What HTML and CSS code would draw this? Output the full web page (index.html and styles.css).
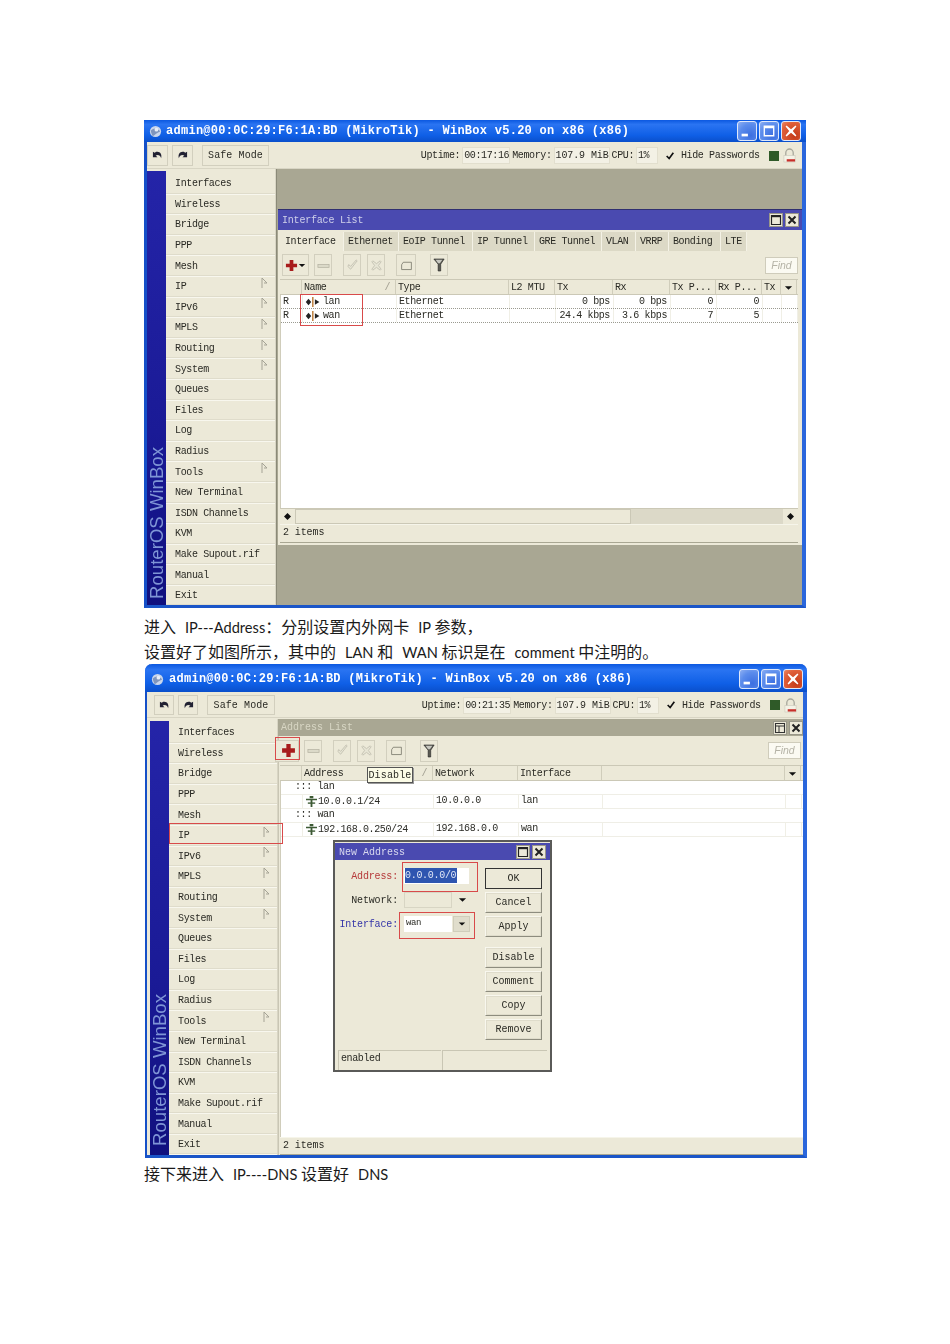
FILE: index.html
```html
<!DOCTYPE html>
<html lang="zh">
<head>
<meta charset="utf-8">
<title>WinBox</title>
<link rel="stylesheet" href="styles.css">
</head>
<body>
<svg class="defs" width="0" height="0" aria-hidden="true">
  <symbol id="i-logo" viewBox="0 0 14 14"><circle cx="7" cy="7" r="6" fill="#c9d6ec"/><path d="M2 6c3-3 7-3 10 1-3 1-6 4-8 5C3 10 2 8 2 6z" fill="#7f95bd"/><circle cx="8" cy="5" r="2" fill="#e8eef8"/></symbol>
  <symbol id="i-undo" viewBox="0 0 16 12"><path d="M3 2v6h5L6 6c2-1 5-1 6 3 1-4-1-7-4-7-1 0-2 0-3 1z" fill="#223"/></symbol>
  <symbol id="i-redo" viewBox="0 0 16 12"><path d="M13 2v6H8l2-2C8 5 5 5 4 9 3 5 5 2 8 2c1 0 2 0 3 1z" fill="#223"/></symbol>
  <symbol id="i-min" viewBox="0 0 20 20"><rect x="4" y="13" width="7" height="3" fill="#fff"/></symbol>
  <symbol id="i-max" viewBox="0 0 20 20"><path d="M4 4h12v12H4zM5.500 7v7.500h9V7z" fill="#fff" fill-rule="evenodd"/></symbol>
  <symbol id="i-close" viewBox="0 0 20 20"><path d="M5 4l5 4 5-4 1 1-4 5 4 5-1 1-5-4-5 4-1-1 4-5-4-5z" fill="#fff"/></symbol>
  <symbol id="i-lock" viewBox="0 0 14 16"><path d="M3 9V5a4 4 0 018 0v4" fill="none" stroke="#a8a89c" stroke-width="1.400"/><rect x="1" y="8" width="12" height="7" fill="#f4f2e6" stroke="#c8c6b8" stroke-width=".6"/><rect x="4" y="12" width="9" height="2.500" fill="#c8302a"/></symbol>
  <symbol id="i-check" viewBox="0 0 12 12"><path d="M2 6l3 3 5-7" fill="none" stroke="#111" stroke-width="2"/></symbol>
  <symbol id="i-plus" viewBox="0 0 14 14"><path d="M5 1h4v4h4v4H9v4H5V9H1V5h4z" fill="#a81c1c"/></symbol>
  <symbol id="i-minus" viewBox="0 0 14 14"><rect x="1" y="6" width="12" height="3" fill="#dcdac9" stroke="#b4b2a2" stroke-width=".8"/></symbol>
  <symbol id="i-tick" viewBox="0 0 14 14"><path d="M2 8l3 3 7-9-1-1-6 7-2-2z" fill="#e8e6d6" stroke="#bab8a8" stroke-width=".8"/></symbol>
  <symbol id="i-cross" viewBox="0 0 14 14"><path d="M2 3l1-1 4 3 4-3 1 1-3 4 3 4-1 1-4-3-4 3-1-1 3-4z" fill="#e8e6d6" stroke="#bab8a8" stroke-width=".8"/></symbol>
  <symbol id="i-note" viewBox="0 0 16 14"><path d="M4 3h10v9H2V6z" fill="#ece9d8" stroke="#77766a"/></symbol>
  <symbol id="i-filter" viewBox="0 0 14 16"><path d="M1 1h12L9 7v8H6V7z" fill="#5a5a52" stroke="#222" stroke-width=".7"/><path d="M3 2h8L8 6H6z" fill="#c8c8c0"/></symbol>
  <symbol id="i-mark" viewBox="0 0 7 12"><path d="M1 1v10M1 1l5 5-3 0" fill="none" stroke="#a5a395"/></symbol>
  <symbol id="i-iface" viewBox="0 0 18 11"><path d="M3.500 2l3 3.500-3 3.500-3-3.500z" fill="#222"/><rect x="7.500" y="0" width="1.500" height="11" fill="#b8742c"/><path d="M10.500 2.500l5 3-5 3z" fill="#222"/></symbol>
  <symbol id="i-addr" viewBox="0 0 14 12"><path d="M1 3h12v1.500H8V12H6V4.500H1z" fill="#3d5a34"/><rect x="5" y="0" width="4" height="2.500" fill="#3d5a34"/><rect x="3" y="7" width="8" height="1.500" fill="#3d5a34"/></symbol>
  <symbol id="i-down" viewBox="0 0 10 6"><path d="M1 1h8L5 5z" fill="#111"/></symbol>
  <symbol id="i-dia" viewBox="0 0 8 8"><path d="M4 0l4 4-4 4-4-4z" fill="#111"/></symbol>
  <symbol id="i-sq" viewBox="0 0 12 12"><path d="M1.500 1.500h9v9h-9z" fill="#ece9d8" stroke="#222" stroke-width="1.200"/><rect x="1" y="1" width="10" height="2.200" fill="#222"/></symbol>
  <symbol id="i-sq2" viewBox="0 0 12 12"><path d="M1.500 1.500h9v9h-9z" fill="none" stroke="#333" stroke-width="1.100"/><path d="M1.500 4h9M5 4v6.500" stroke="#333" stroke-width="1"/></symbol>
  <symbol id="i-x" viewBox="0 0 12 12"><path d="M2.500 2.500l7 7M9.500 2.500l-7 7" stroke="#222" stroke-width="2"/></symbol>
</svg>

<main class="page">
  <!-- first window -->
  <section class="win win-a ui">
    <header class="titlebar">
      <svg class="logo"><use href="#i-logo"/></svg>
      <span class="title-text">admin@00:0C:29:F6:1A:BD (MikroTik) - WinBox v5.20 on x86 (x86)</span>
      <span class="xp-btns">
        <span class="xp xp-blue"><svg><use href="#i-min"/></svg></span>
        <span class="xp xp-blue"><svg><use href="#i-max"/></svg></span>
        <span class="xp xp-red"><svg><use href="#i-close"/></svg></span>
      </span>
    </header>
    <div class="toolbar">
      <button class="tb-btn"><svg><use href="#i-undo"/></svg></button>
      <button class="tb-btn"><svg><use href="#i-redo"/></svg></button>
      <button class="tb-btn safe">Safe Mode</button>
      <span class="status-group">
        <span>Uptime:</span><span class="stat s-up">00:17:16</span>
        <span>Memory:</span><span class="stat s-mem">107.9 MiB</span>
        <span>CPU:</span><span class="stat s-cpu">1%</span>
        <span class="chk"><svg><use href="#i-check"/></svg></span>
        <span class="hide">Hide Passwords</span>
        <span class="led"></span>
        <svg class="lock"><use href="#i-lock"/></svg>
      </span>
    </div>
    <div class="main">
      <div class="strip"><span class="brand">RouterOS WinBox</span></div>
      <nav class="menu">
        <div class="mi">Interfaces</div><div class="mi">Wireless</div><div class="mi">Bridge</div><div class="mi">PPP</div><div class="mi">Mesh</div>
        <div class="mi">IP<svg class="mark"><use href="#i-mark"/></svg></div>
        <div class="mi">IPv6<svg class="mark"><use href="#i-mark"/></svg></div>
        <div class="mi">MPLS<svg class="mark"><use href="#i-mark"/></svg></div>
        <div class="mi">Routing<svg class="mark"><use href="#i-mark"/></svg></div>
        <div class="mi">System<svg class="mark"><use href="#i-mark"/></svg></div>
        <div class="mi">Queues</div><div class="mi">Files</div><div class="mi">Log</div><div class="mi">Radius</div>
        <div class="mi">Tools<svg class="mark"><use href="#i-mark"/></svg></div>
        <div class="mi">New Terminal</div><div class="mi">ISDN Channels</div><div class="mi">KVM</div><div class="mi">Make Supout.rif</div><div class="mi">Manual</div><div class="mi">Exit</div>
      </nav>
      <div class="desktop">
        <div class="subwin">
          <div class="subtitle">
            <span>Interface List</span>
            <span class="sub-btns"><span class="sq"><svg><use href="#i-sq"/></svg></span><span class="sq"><svg><use href="#i-x"/></svg></span></span>
          </div>
          <div class="tabs">
            <span class="tab active">Interface</span><span class="tab t-eth">Ethernet</span><span class="tab t-eoip">EoIP Tunnel</span><span class="tab t-ip">IP Tunnel</span><span class="tab t-gre">GRE Tunnel</span><span class="tab t-vlan">VLAN</span><span class="tab t-vrrp">VRRP</span><span class="tab t-bond">Bonding</span><span class="tab t-lte">LTE</span>
          </div>
          <div class="tabpanel">
            <div class="list-tools">
              <button class="lt lt-add"><svg class="ic14"><use href="#i-plus"/></svg><svg class="ic-dn"><use href="#i-down"/></svg></button>
              <button class="lt lt-m"><svg class="ic14"><use href="#i-minus"/></svg></button>
              <button class="lt lt-c"><svg class="ic14"><use href="#i-tick"/></svg></button>
              <button class="lt lt-x"><svg class="ic14"><use href="#i-cross"/></svg></button>
              <button class="lt lt-n"><svg class="ic14"><use href="#i-note"/></svg></button>
              <button class="lt lt-f"><svg class="ic14"><use href="#i-filter"/></svg></button>
              <span class="find">Find</span>
            </div>
            <div class="grid-if g-head">
              <span></span><span class="sorted">Name<i>/</i></span><span>Type</span><span>L2 MTU</span><span>Tx</span><span>Rx</span><span>Tx P...</span><span>Rx P...</span><span>Tx</span><span class="h-arrow"><svg><use href="#i-down"/></svg></span>
            </div>
            <div class="list-body">
              <div class="grid-if g-row">
                <span>R</span><span class="nm"><svg class="if-ic"><use href="#i-iface"/></svg>lan</span><span>Ethernet</span><span></span><span class="r">0 bps</span><span class="r">0 bps</span><span class="r">0</span><span class="r">0</span><span></span><span></span>
              </div>
              <div class="grid-if g-row">
                <span>R</span><span class="nm"><svg class="if-ic"><use href="#i-iface"/></svg>wan</span><span>Ethernet</span><span></span><span class="r">24.4 kbps</span><span class="r">3.6 kbps</span><span class="r">7</span><span class="r">5</span><span></span><span></span>
              </div>
            </div>
            <div class="hscroll">
              <span class="sb-btn"><svg><use href="#i-dia"/></svg></span><span class="sb-thumb"></span><span class="sb-track"></span><span class="sb-btn"><svg><use href="#i-dia"/></svg></span>
            </div>
            <div class="status-line">2 items</div>
          </div>
        </div>
      </div>
    </div>
    <div class="redbox rb-a1"></div>
  </section>

  <p class="doc doc-first">进入 <span class="lat">IP---Address</span>：分别设置内外网卡 <span class="lat">IP </span>参数，</p>
  <p class="doc">设置好了如图所示，其中的 <span class="lat">LAN </span>和 <span class="lat">WAN </span>标识是在 <span class="lat">comment </span>中注明的。</p>

  <!-- second window -->
  <section class="win win-b ui">
    <header class="titlebar">
      <svg class="logo"><use href="#i-logo"/></svg>
      <span class="title-text">admin@00:0C:29:F6:1A:BD (MikroTik) - WinBox v5.20 on x86 (x86)</span>
      <span class="xp-btns">
        <span class="xp xp-blue"><svg><use href="#i-min"/></svg></span>
        <span class="xp xp-blue"><svg><use href="#i-max"/></svg></span>
        <span class="xp xp-red"><svg><use href="#i-close"/></svg></span>
      </span>
    </header>
    <div class="toolbar">
      <button class="tb-btn"><svg><use href="#i-undo"/></svg></button>
      <button class="tb-btn"><svg><use href="#i-redo"/></svg></button>
      <button class="tb-btn safe">Safe Mode</button>
      <span class="status-group">
        <span>Uptime:</span><span class="stat s-up">00:21:35</span>
        <span>Memory:</span><span class="stat s-mem">107.9 MiB</span>
        <span>CPU:</span><span class="stat s-cpu">1%</span>
        <span class="chk"><svg><use href="#i-check"/></svg></span>
        <span class="hide">Hide Passwords</span>
        <span class="led"></span>
        <svg class="lock"><use href="#i-lock"/></svg>
      </span>
    </div>
    <div class="main">
      <div class="strip"><span class="brand">RouterOS WinBox</span></div>
      <nav class="menu">
        <div class="mi">Interfaces</div><div class="mi">Wireless</div><div class="mi">Bridge</div><div class="mi">PPP</div><div class="mi">Mesh</div>
        <div class="mi">IP<svg class="mark"><use href="#i-mark"/></svg></div>
        <div class="mi">IPv6<svg class="mark"><use href="#i-mark"/></svg></div>
        <div class="mi">MPLS<svg class="mark"><use href="#i-mark"/></svg></div>
        <div class="mi">Routing<svg class="mark"><use href="#i-mark"/></svg></div>
        <div class="mi">System<svg class="mark"><use href="#i-mark"/></svg></div>
        <div class="mi">Queues</div><div class="mi">Files</div><div class="mi">Log</div><div class="mi">Radius</div>
        <div class="mi">Tools<svg class="mark"><use href="#i-mark"/></svg></div>
        <div class="mi">New Terminal</div><div class="mi">ISDN Channels</div><div class="mi">KVM</div><div class="mi">Make Supout.rif</div><div class="mi">Manual</div><div class="mi">Exit</div>
      </nav>
      <div class="addr">
        <div class="addr-title">
          <span>Address List</span>
          <span class="sub-btns"><span class="sq"><svg><use href="#i-sq2"/></svg></span><span class="sq"><svg><use href="#i-x"/></svg></span></span>
        </div>
        <div class="list-tools tools-b">
          <button class="lt lt-add2"><svg class="ic14"><use href="#i-plus"/></svg></button>
          <button class="lt lt-m"><svg class="ic14"><use href="#i-minus"/></svg></button>
          <button class="lt lt-c"><svg class="ic14"><use href="#i-tick"/></svg></button>
          <button class="lt lt-x"><svg class="ic14"><use href="#i-cross"/></svg></button>
          <button class="lt lt-n"><svg class="ic14"><use href="#i-note"/></svg></button>
          <button class="lt lt-f"><svg class="ic14"><use href="#i-filter"/></svg></button>
          <span class="find find-b">Find</span>
        </div>
        <div class="grid-ad g-head">
          <span></span><span class="sorted">Address<i>/</i></span><span>Network</span><span>Interface</span><span></span><span class="h-arrow"><svg><use href="#i-down"/></svg></span>
        </div>
        <div class="list-body">
          <div class="ad-comment">::: lan</div>
          <div class="grid-ad ad-row"><span></span><span class="nm"><svg class="ad-ic"><use href="#i-addr"/></svg>10.0.0.1/24</span><span>10.0.0.0</span><span>lan</span><span></span><span></span></div>
          <div class="ad-comment">::: wan</div>
          <div class="grid-ad ad-row"><span></span><span class="nm"><svg class="ad-ic"><use href="#i-addr"/></svg>192.168.0.250/24</span><span>192.168.0.0</span><span>wan</span><span></span><span></span></div>
        </div>
        <div class="status-line st-b">2 items</div>
      </div>
    </div>

    <div class="tooltip">Disable</div>
    <div class="redbox rb-b1"></div>
    <div class="redbox rb-b2"></div>

    <div class="dialog">
      <div class="dlg-title"><span>New Address</span><span class="sub-btns"><span class="sq"><svg><use href="#i-sq"/></svg></span><span class="sq"><svg><use href="#i-x"/></svg></span></span></div>
      <div class="dlg-body">
        <div class="dlg-form">
          <div class="frow"><label class="lb-red">Address:</label><span class="inp inp-addr"><b>0.0.0.0/0</b></span></div>
          <div class="frow"><label>Network:</label><span class="inp inp-off"></span><svg class="dd"><use href="#i-down"/></svg></div>
          <div class="frow"><label class="lb-blue">Interface:</label><span class="inp inp-w">wan</span><span class="ddbtn"><svg><use href="#i-down"/></svg></span></div>
        </div>
        <div class="dlg-btns">
          <button class="dbtn def">OK</button><button class="dbtn">Cancel</button><button class="dbtn gap">Apply</button>
          <button class="dbtn">Disable</button><button class="dbtn">Comment</button><button class="dbtn">Copy</button><button class="dbtn">Remove</button>
        </div>
      </div>
      <div class="dlg-status"><span>enabled</span><span></span></div>
      <div class="redbox rb-d1"></div>
      <div class="redbox rb-d2"></div>
    </div>
  </section>

  <p class="doc doc-last">接下来进入 <span class="lat">IP----DNS </span>设置好 <span class="lat">DNS</span></p>
</main>
</body>
</html>
```
FILE: styles.css
```css
* { box-sizing: border-box; }
html, body { margin: 0; padding: 0; background: #fff; }
.defs { position: absolute; }
.page { width: 950px; height: 1344px; padding: 120px 0 0 144px; overflow: hidden; }

.doc {
  margin: 0; height: 25px; line-height: 25px; font-size: 16px; color: #1a1a1a;
  font-family: Lato, "Noto Sans CJK SC", sans-serif;
  white-space: nowrap; word-spacing: 4.900px;
}
.doc-first { margin-top: 6px; }
.doc-last { margin-top: 3px; }
.lat { font-size: 14.600px; word-spacing: 0; }

.ui {
  font-family: "Liberation Mono", "DejaVu Sans Mono", monospace;
  font-size: 10px; letter-spacing: -.38px; color: #2a2a24;
}
.win {
  position: relative; width: 662px; display: flex; flex-direction: column;
  background: #ece9d8; filter: blur(.4px);
  border-left: 3px solid #1550c8; border-right: 4px solid #2a66dc; border-bottom: 3px solid #1a55c8;
}
.win-a { height: 488px; }
.win-b { height: 494px; margin-left: 1px; border-left-width: 2px; border-top-left-radius: 7px; border-top-right-radius: 7px; }

.titlebar {
  display: flex; align-items: center; margin: 0 -4px 0 -3px; padding: 0 5px 0 5px;
  background: linear-gradient(#0b58e0, #2a74f2 20%, #0f5fe6 70%, #0a4fcb);
  color: #fff; height: 22px;
}
.win-b .titlebar { height: 28px; border-radius: 7px 7px 0 0; padding: 2px 4px 0 6px; margin-left: -2px; }
.logo { width: 13px; height: 13px; flex: none; }
.title-text { margin-left: 4px; font-size: 12px; font-weight: 700; letter-spacing: .27px; white-space: nowrap; }
.win-b .title-text { margin-left: 5px; }
.xp-btns { margin-left: auto; display: flex; gap: 2px; }
.xp { width: 20px; height: 20px; border: 1px solid #dfe8fa; border-radius: 3px; display: block; }
.xp svg { width: 18px; height: 18px; display: block; }
.xp-blue { background: radial-gradient(circle at 70% 75%, #3c6fe0, #5b8cec 60%, #8fb0f2); }
.xp-red { background: radial-gradient(circle at 70% 75%, #c43a18, #e0603a 70%, #ec8a66); }

.toolbar { display: flex; align-items: center; height: 27px; background: #ece9d8; padding-left: 0; padding-top: 1px; border-bottom: 1px solid #d8d5c4; }
.win-b .toolbar { height: 26px; padding-left: 7px; }
.tb-btn {
  font: inherit; letter-spacing: inherit; color: inherit; width: 21px; height: 21px; padding: 0; margin-right: 4px;
  background: #ece9d8; border: 1px solid #d2cfbe; display: flex; align-items: center; justify-content: center;
}
.win-b .tb-btn { width: 20px; height: 20px; }
.tb-btn svg { width: 15px; height: 11px; }
.tb-btn.safe { width: 67px; margin-left: 5px; margin-right: 0; font-size: 10px; letter-spacing: .1px; }
.win-b .tb-btn.safe { width: 68px; margin-left: 5px; }
.status-group { margin-left: auto; display: flex; align-items: center; padding-right: 6px; white-space: nowrap; }
.stat { background: #f3f1e5; border: 1px solid #e2dfce; height: 17px; line-height: 15px; padding-left: 1px; margin: 0 2px; }
.s-up { width: 48px; }
.s-mem { width: 56px; letter-spacing: -.1px; }
.s-cpu { width: 22px; }
.chk { width: 10px; height: 10px; margin: 0 6px 0 5px; display: block; }
.chk svg { width: 10px; height: 10px; display: block; }
.hide { width: 79px; }
.led { width: 10px; height: 10px; background: #2f5a28; margin-left: 9px; }
.lock { width: 13px; height: 15px; margin-left: 4px; }

.main { flex: 1; display: flex; min-height: 0; overflow: hidden; background: #ece9d8; }
.win-b .main { padding-left: 3px; padding-top: 1px; }
.strip {
  width: 19px; flex: none; background: linear-gradient(#2424a8, #1a1a96 60%, #10107e);
  display: flex; align-items: flex-end; justify-content: center; padding-bottom: 6px; margin-top: 2px; overflow: hidden;
}
.win-b .strip { padding-bottom: 9px; }
.brand {
  writing-mode: vertical-rl; transform: rotate(180deg); font-family: "Liberation Sans", Arial, sans-serif;
  font-size: 18.600px; letter-spacing: 0; color: #7f95d6; white-space: nowrap;
}
.menu { width: 110px; flex: none; padding-top: 5px; border-right: 1px solid #d8d5c4; }
.win-b .menu { width: 109px; padding-top: 4px; }
.mi {
  height: 20.600px; display: flex; align-items: center; justify-content: space-between;
  padding: 0 7px 0 9px; border-bottom: 1px solid #f8f7ee; box-shadow: inset 0 -1px 0 #dfdccb;
  letter-spacing: -.36px;
}
.mark { width: 7px; height: 12px; margin-top: -8px; }

.desktop { flex: 1; background: #a9a793; padding: 40px 0 60px 1px; border-left: 1px solid #8b8a78; }
.subwin { height: 100%; display: flex; flex-direction: column; background: #ece9d8; border-right: 1px solid #8b8a78; }
.subtitle {
  height: 21px; flex: none; background: #4a4ab0; color: #cfd0ea; display: flex; align-items: center; justify-content: space-between;
  padding: 0 4px; border-top: 1px solid #2f2f70; letter-spacing: -.2px;
}
.sub-btns { display: flex; gap: 2px; }
.sq { width: 14px; height: 14px; background: #ece9d8; border: 1px solid #999789; display: block; }
.sq svg { width: 12px; height: 12px; display: block; }
.tabs { display: flex; height: 21px; flex: none; padding: 2px 0 0 2px; }
.tab { height: 19px; line-height: 19px; padding-left: 4px; background: #dcd9c6; border-right: 1px solid #f4f2e6; white-space: nowrap; }
.tab.active { background: #ece9d8; width: 64px; padding-left: 5px; }
.t-eth { width: 55px; } .t-eoip { width: 74px; } .t-ip { width: 62px; } .t-gre { width: 67px; }
.t-vlan { width: 34px; } .t-vrrp { width: 33px; } .t-bond { width: 52px; } .t-lte { width: 26px; }
.tabpanel { flex: 1; display: flex; flex-direction: column; margin: 0 5px 2px 2px; min-height: 0; }

.list-tools { height: 28px; flex: none; display: flex; align-items: center; padding-left: 2px; }
.lt { padding: 0; background: #ece9d8; border: 1px solid #d2cfbe; height: 22px; width: 18px; display: flex; align-items: center; justify-content: center; margin-right: 6px; }
.ic14 { width: 13px; height: 13px; flex: none; }
.ic-dn { width: 8px; height: 5px; }
.lt-add { width: 27px; margin-right: 5px; }
.lt-m { width: 18px; margin-right: 11px; }
.lt-c { margin-right: 6px; }
.lt-x { margin-right: 11px; }
.lt-n { width: 20px; margin-right: 14px; }
.lt-f { width: 18px; }
.lt-f .ic14 { width: 12px; height: 14px; }
.find {
  margin-left: auto; width: 33px; height: 17px; background: #fbfaf2; border: 1px solid #cfccbb; color: #b5b3a6;
  font: italic 10.500px "Liberation Sans", sans-serif; letter-spacing: 0; text-align: center; line-height: 15px;
}

.grid-if { display: grid; grid-template-columns: 22px 94px 113px 46px 58px 57px 46px 46px 19px 16px; }
.g-head { height: 16px; flex: none; background: #ece9d8; border-top: 1px solid #cbc8b6; border-bottom: 1px solid #cbc8b6; }
.g-head > span { padding: 1px 2px 0; line-height: 14px; border-right: 1px solid #d0cdbb; white-space: nowrap; overflow: hidden; }
.sorted { display: flex; justify-content: space-between; }
.sorted i { color: #a09e90; font-style: normal; padding-right: 3px; }
.h-arrow { display: flex; align-items: center; justify-content: center; }
.h-arrow svg { width: 9px; height: 6px; }

.list-body { flex: 1; background: #fff; min-height: 0; border-left: 1px solid #d0cdbb; }
.g-row { height: 14px; border-bottom: 1px dotted #9a9a90; }
.g-row > span { padding: 0 2px; line-height: 13px; border-right: 1px solid #f0efe6; white-space: nowrap; }
.g-row .r { text-align: right; padding-right: 3px; }
.nm { display: flex; align-items: center; }
.if-ic { width: 17px; height: 10px; flex: none; margin-right: 1px; }

.hscroll { height: 16px; flex: none; display: flex; background: #ece9d8; border-top: 1px solid #cbc8b6; }
.sb-btn { width: 15px; display: flex; align-items: center; justify-content: center; }
.sb-btn svg { width: 7px; height: 7px; }
.sb-thumb { width: 336px; background: #ece9d8; border: 1px solid #cbc8b6; }
.sb-track { flex: 1; background: #dcd9c8; }
.status-line { height: 19px; flex: none; padding-left: 3px; line-height: 16px; border-top: 1px solid #f6f5ea; letter-spacing: -.1px; border-bottom: 1px solid #a9a793; }

.addr { flex: 1; display: flex; flex-direction: column; min-width: 0; border-left: 1px solid #c9c6b4; padding-left: 1px; }
.addr-title {
  height: 17px; margin-left: -2px; flex: none; background: #a9a793; color: #d8d6c4; display: flex; align-items: center; justify-content: space-between;
  padding: 0 0 0 3px; letter-spacing: 0;
}
.tools-b { height: 29px; margin-left: -5px; padding-left: 0; }
.lt-add2 { width: 24px; margin-right: 5px; padding-left: 3px; }
.lt-add2 .ic14 { width: 15px; height: 15px; }
.find-b { margin-right: 2px; }
.grid-ad { display: grid; grid-template-columns: 22px 131px 85px 84px 183px 16px; }
.ad-comment { height: 13px; padding-left: 14px; line-height: 12px; white-space: nowrap; }
.ad-row { height: 15px; background: #fff; border-top: 1px solid #efeee6; border-bottom: 1px solid #efeee6; }
.ad-row > span { line-height: 12px; padding: 0 2px; border-right: 1px solid #f0efe6; white-space: nowrap; }
.ad-ic { width: 13px; height: 11px; flex: none; }
.st-b { height: 18px; }

.redbox { position: absolute; border: 1px solid #d84a4a; pointer-events: none; }
.rb-a1 { left: 153px; top: 174px; width: 63px; height: 32px; }
.rb-b1 { left: 128px; top: 73px; width: 25px; height: 23px; }
.rb-b2 { left: 22px; top: 159px; width: 114px; height: 21px; }

.tooltip {
  position: absolute; left: 220px; top: 103px; width: 46px; height: 16px; background: #fbfbe6; border: 1px solid #555;
  line-height: 15px; text-align: center; letter-spacing: .15px; z-index: 2; box-shadow: 1px 1px 0 #999;
}

.dialog {
  position: absolute; left: 186px; top: 176px; width: 219px; height: 232px; background: #ece9d8; border: 2px solid #5a5a58;
  display: flex; flex-direction: column; z-index: 3;
}
.dlg-title {
  height: 17px; flex: none; margin-top: 1px; background: #4a4ab0; color: #d8d8ee; display: flex; align-items: center; justify-content: space-between;
  padding: 0 4px; letter-spacing: 0;
}
.dlg-title > span:first-child { padding-top: 2px; }
.dlg-body { flex: 1; display: flex; justify-content: space-between; min-height: 0; padding: 8px 8px 0 0; }
.dlg-form { width: 136px; display: flex; flex-direction: column; gap: 8px; }
.frow { display: flex; align-items: center; height: 16px; }
.frow label { width: 63px; text-align: right; margin-right: 6px; flex: none; letter-spacing: -.15px; }
.lb-red { color: #b63a3a; }
.lb-blue { color: #3434a8; }
.inp { height: 16px; width: 48px; background: #fff; line-height: 15px; white-space: nowrap; flex: none; }
.inp-addr { width: 65px; padding-left: 1px; }
.inp-addr b { background: #2e55b0; color: #dfe6f6; font-weight: 400; letter-spacing: -.3px; display: inline-block; width: 52px; }
.inp-off { background: #ece9d8; border: 1px solid #d8d5c4; }
.inp-w { padding-left: 2px; font-size: 9px; }
.dd { width: 9px; height: 6px; margin-left: 6px; }
.ddbtn { width: 17px; height: 16px; margin-left: 1px; background: #e0ddcc; border: 1px solid #d0cdbb; display: flex; align-items: center; justify-content: center; }
.ddbtn svg { width: 8px; height: 6px; }
.dlg-btns { width: 57px; display: flex; flex-direction: column; gap: 3px; }
.dbtn {
  font: inherit; letter-spacing: 0; color: inherit; height: 21px; flex: none; padding: 0; background: #ece9d8;
  border: 1px solid; border-color: #f8f7ee #8d8c7e #8d8c7e #f8f7ee; box-shadow: inset 0 0 0 1px #dfdccb;
}
.dbtn.def { border: 1px solid #333; box-shadow: none; }
.dbtn.gap { margin-bottom: 7px; }
.dlg-status { height: 20px; margin: 0 3px; flex: none; display: grid; grid-template-columns: 103px 1fr; gap: 1px; }
.dlg-status span { border-top: 1px solid #c9c6b4; border-left: 1px solid #c9c6b4; padding-left: 2px; line-height: 16px; }
.rb-d1 { left: 67px; top: 20px; width: 76px; height: 30px; }
.rb-d2 { left: 64px; top: 70px; width: 76px; height: 27px; }
```
